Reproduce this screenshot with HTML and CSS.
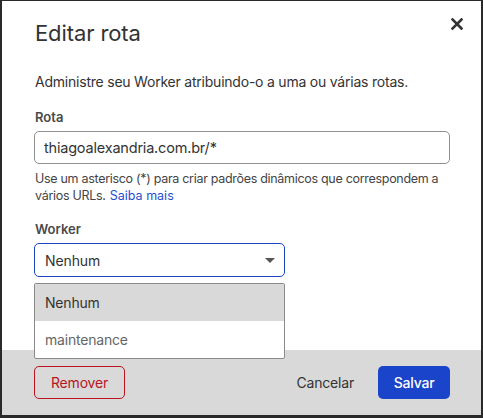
FILE: index.html
```html
<!DOCTYPE html>
<html lang="pt-BR">
<head>
<meta charset="utf-8">
<title>Editar rota</title>
<link rel="stylesheet" href="styles.css">
</head>
<body>
<div class="modal">
  <div class="modal-body">
    <div class="header">
      <h1 class="title">Editar rota</h1>
      <button class="close" aria-label="Fechar">
        <svg width="12" height="12" viewBox="0 0 12 12"><path d="M1.5 1.5 L10.5 10.5 M10.5 1.5 L1.5 10.5" stroke="#333" stroke-width="2.6" stroke-linecap="square"/></svg>
      </button>
    </div>
    <p class="desc">Administre seu Worker atribuindo-o a uma ou várias rotas.</p>
    <label class="label">Rota</label>
    <div class="input">thiagoalexandria.com.br/*</div>
    <p class="help"><span class="help-line">Use um asterisco (*) para criar padrões dinâmicos que correspondem a</span> <span class="help-line">vários URLs.</span> <a class="link" href="#">Saiba mais</a></p>
    <label class="label worker-label">Worker</label>
    <div class="select-wrap">
      <div class="select">
        <span>Nenhum</span>
        <span class="caret"></span>
      </div>
      <ul class="menu">
        <li class="option active">Nenhum</li>
        <li class="option muted">maintenance</li>
      </ul>
    </div>
  </div>
  <div class="footer">
    <button class="btn btn-danger">Remover</button>
    <div class="footer-right">
      <button class="btn btn-plain">Cancelar</button>
      <button class="btn btn-primary">Salvar</button>
    </div>
  </div>
</div>
</body>
</html>
```
FILE: styles.css
```css
* { box-sizing: border-box; }
html, body { margin: 0; padding: 0; }
body {
  background: #2a2a2a;
  font-family: Inter, "Liberation Sans", sans-serif;
  color: #333;
  width: 483px;
  height: 418px;
  overflow: hidden;
}
.modal {
  margin: 1px 0 0 2px;
  width: 479px;
  height: 414px;
  background: #fff;
  display: flex;
  flex-direction: column;
}
.modal-body {
  padding: 18px 31px 0 32px;
  flex: 1;
  position: relative;
}
.header {
  display: flex;
  justify-content: space-between;
  align-items: flex-start;
}
.title {
  margin: 0 0 0 1px;
  font-size: 22px;
  line-height: 28px;
  font-weight: 400;
  color: #333;
  letter-spacing: -0.1px;
}
.close {
  border: 0;
  background: none;
  padding: 0;
  margin: -1px -13px 0 0;
  width: 12px;
  height: 12px;
  display: flex;
}
.desc {
  margin: 25px 0 0 1px;
  font-size: 14px;
  line-height: 20px;
  letter-spacing: -0.22px;
  color: #333;
}
.label {
  display: block;
  margin: 16px 0 0 1px;
  font-size: 13px;
  line-height: 18px;
  font-weight: 600;
  color: #4a4a4a;
}
.input {
  margin-top: 5px;
  height: 33px;
  border: 1px solid #8f8f8f;
  border-radius: 5px;
  padding: 0 9px;
  display: flex;
  align-items: center;
  font-size: 14.5px;
  letter-spacing: -0.2px;
  color: #333;
}
.help {
  margin: 6px 0 0 1px;
  font-size: 12.5px;
  line-height: 17px;
  letter-spacing: -0.3px;
  color: #444;
}
.help-line { white-space: nowrap; }
.link {
  color: #1f4fd1;
  text-decoration: none;
  margin-left: 1px;
  letter-spacing: 0;
}
.select-wrap {
  margin-top: 5px;
  width: 251px;
  position: relative;
}
.select {
  height: 34px;
  border: 1px solid #1d43c4;
  border-radius: 5px;
  padding: 0 9px 0 10px;
  display: flex;
  align-items: center;
  justify-content: space-between;
  font-size: 14px;
  letter-spacing: -0.1px;
  color: #333;
}
.caret {
  width: 0;
  height: 0;
  border-left: 5px solid transparent;
  border-right: 5px solid transparent;
  border-top: 5px solid #555;
}
.menu {
  position: absolute;
  left: 0;
  right: 0;
  top: 40px;
  margin: 0;
  padding: 0;
  list-style: none;
  background: #fff;
  border: 1px solid #8a8a8a;
  border-radius: 2px;
  z-index: 2;
}
.option {
  height: 37px;
  display: flex;
  align-items: center;
  padding: 0 10px;
  font-size: 14px;
  letter-spacing: -0.2px;
  color: #333;
}
.option.active { background: #d9d9d9; }
.option.muted { color: #666; }
.footer {
  height: 65px;
  background: #d9d9d9;
  padding: 16px 31px 16px 32px;
  display: flex;
  justify-content: space-between;
  align-items: flex-start;
}
.footer-right { display: flex; gap: 12px; }
.btn {
  height: 33px;
  font-family: Inter, "Liberation Sans", sans-serif;
  font-size: 14px;
  letter-spacing: -0.2px;
  border-radius: 5px;
  padding: 0 12px;
  cursor: pointer;
}
.btn-danger {
  width: 91px;
  background: transparent;
  border: 1px solid #b8151d;
  color: #b8151d;
}
.btn-plain {
  background: transparent;
  border: 0;
  color: #333;
  padding: 0 12px;
}
.btn-primary {
  width: 72px;
  background: #1a44c9;
  border: 0;
  color: #fff;
  font-weight: 500;
}
```
